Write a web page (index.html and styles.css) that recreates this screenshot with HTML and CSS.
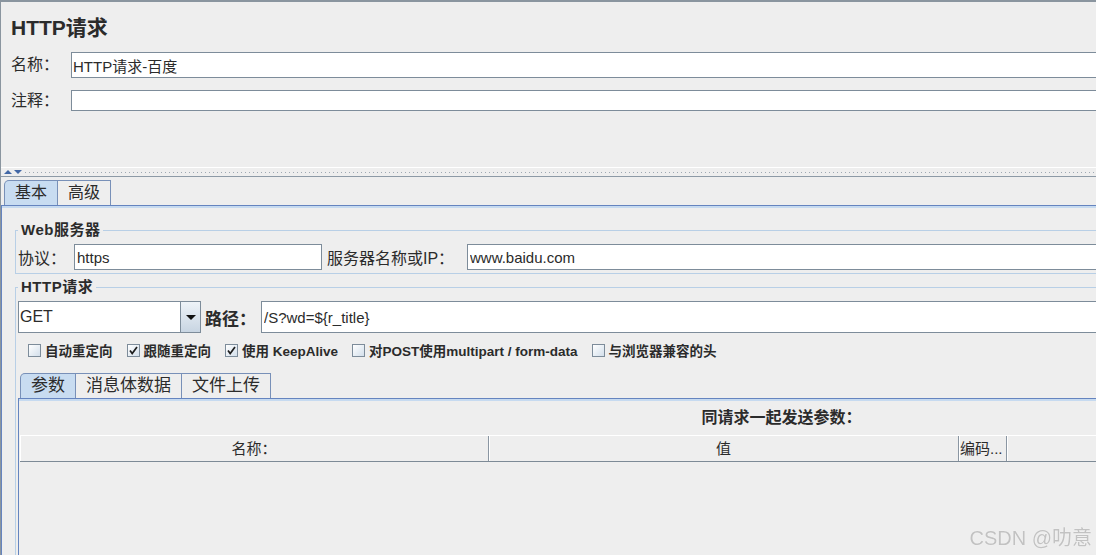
FILE: index.html
```html
<!DOCTYPE html>
<html lang="zh-CN">
<head>
    <meta charset="UTF-8">
    <title>HTTP请求</title>
    <link rel="stylesheet" href="styles.css">
</head>
<body>
    <div class="window">
        <div class="header">
            <h1 class="title">HTTP请求</h1>
            <div class="field-row name-row">
                <label class="field-label">名称：</label>
                <input class="text-input" type="text" value="HTTP请求-百度">
            </div>
            <div class="field-row comment-row">
                <label class="field-label">注释：</label>
                <input class="text-input" type="text" value="">
            </div>
        </div>

        <div class="splitter">
            <span class="arrow-up"></span>
            <span class="arrow-down"></span>
            <span class="dots"></span>
        </div>

        <div class="tabs">
            <div class="tab-strip">
                <div class="tab active">基本</div>
                <div class="tab">高级</div>
            </div>
            <div class="tab-panel">
                <fieldset class="group">
                    <legend>Web服务器</legend>
                    <div class="group-row">
                        <label class="proto-label">协议：</label>
                        <input class="text-input proto" type="text" value="https">
                        <label class="server-label">服务器名称或IP：</label>
                        <input class="text-input grow" type="text" value="www.baidu.com">
                    </div>
                </fieldset>

                <fieldset class="group http-group">
                    <legend>HTTP请求</legend>
                    <div class="group-row">
                        <div class="combo">
                            <span class="combo-value">GET</span>
                            <span class="combo-arrow"><span class="caret"></span></span>
                        </div>
                        <label class="path-label">路径：</label>
                        <input class="text-input grow path" type="text" value="/S?wd=${r_title}">
                    </div>

                    <div class="check-row">
                        <label class="check"><span class="box"></span>自动重定向</label>
                        <label class="check"><span class="box"><svg viewBox="0 0 13 13" width="13" height="13"><path d="M3 6.5 L5.2 9.5 L10 3" fill="none" stroke="#1e1e1e" stroke-width="1.7"/></svg></span>跟随重定向</label>
                        <label class="check"><span class="box"><svg viewBox="0 0 13 13" width="13" height="13"><path d="M3 6.5 L5.2 9.5 L10 3" fill="none" stroke="#1e1e1e" stroke-width="1.7"/></svg></span>使用 KeepAlive</label>
                        <label class="check"><span class="box"></span>对POST使用multipart / form-data</label>
                        <label class="check"><span class="box"></span>与浏览器兼容的头</label>
                    </div>

                    <div class="tab-strip inner-strip">
                        <div class="tab active">参数</div>
                        <div class="tab">消息体数据</div>
                        <div class="tab">文件上传</div>
                    </div>
                    <div class="tab-panel inner-panel">
                        <div class="send-title">同请求一起发送参数：</div>
                        <div class="param-table">
                            <div class="th">名称：</div>
                            <div class="th">值</div>
                            <div class="th encode">编码...</div>
                            <div class="th last"></div>
                        </div>
                    </div>
                </fieldset>
            </div>
        </div>
    </div>
    <div class="watermark">CSDN @叻意</div>
</body>
</html>
```

FILE: styles.css
```css
html, body {
    margin: 0;
    padding: 0;
    overflow: hidden;
}
body {
    width: 1096px;
    height: 555px;
    background-color: #eeeeee;
    font-family: "Liberation Sans", "Noto Sans CJK SC", sans-serif;
    color: #2b2b2b;
}
.window {
    width: 1545px;
    height: 600px;
    box-sizing: border-box;
    border-top: 2px solid #8a959f;
    border-left: 1px solid #8a959f;
    display: flex;
    flex-direction: column;
}

/* top part: title, name, comment */
.header {
    height: 165px;
    flex: none;
}
.title {
    margin: 0;
    padding: 12px 0 0 10px;
    font-size: 21px;
    line-height: 28px;
    font-weight: bold;
    color: #2b2b2b;
}
.field-row {
    display: flex;
    align-items: center;
    padding-left: 10px;
}
.field-label {
    width: 60px;
    flex: none;
    font-size: 16px;
    line-height: 20px;
}
.name-row {
    margin-top: 10px;
}
.name-row .text-input {
    height: 26px;
}
.comment-row {
    margin-top: 12px;
}
.comment-row .text-input {
    height: 21px;
}
.text-input {
    flex: 1;
    min-width: 0;
    box-sizing: border-box;
    margin: 0;
    padding: 0 1px;
    border: 1px solid #7d8c9a;
    background-color: #fff;
    font: 15px "Liberation Sans", "Noto Sans CJK SC", sans-serif;
    color: #2b2b2b;
    outline: none;
}

/* split pane divider */
.splitter {
    flex: none;
    height: 10px;
    box-sizing: border-box;
    border-top: 1px solid #fff;
    border-bottom: 1px solid #8d9aa6;
    display: flex;
    align-items: center;
    padding-left: 3px;
    gap: 1px;
}
.arrow-up {
    width: 0;
    height: 0;
    border-left: 4px solid transparent;
    border-right: 4px solid transparent;
    border-bottom: 4px solid #4268a6;
}
.arrow-down {
    width: 0;
    height: 0;
    margin-left: 1px;
    border-left: 4px solid transparent;
    border-right: 4px solid transparent;
    border-top: 4px solid #4268a6;
}
.dots {
    flex: 1;
    height: 1px;
    margin-left: 2px;
    margin-top: 1px;
    background: repeating-linear-gradient(90deg, #9ea8b2 0 1px, transparent 1px 4px);
}

/* tabs */
.tabs {
    flex: 1;
    display: flex;
    flex-direction: column;
}
.tab-strip {
    display: flex;
    align-items: flex-end;
    padding: 3px 0 0 3px;
}
.tab {
    height: 25px;
    box-sizing: border-box;
    padding: 0 10px;
    border: 1px solid #7890b8;
    border-bottom: none;
    font-size: 16px;
    line-height: 23px;
    color: #2b2b2b;
    background-color: #eeeeee;
}
.tab + .tab {
    border-left: none;
}
.tab.active {
    background-color: #c8dcf1;
    border-top-left-radius: 5px;
}
.tab-panel {
    flex: 1;
    border-top: 1px solid #6584bf;
    border-left: 1px solid #6584bf;
    box-shadow: inset 0 2px 0 #c6daf0;
    padding: 15px 0 0 13px;
    display: flex;
    flex-direction: column;
}

/* titled groups */
.group {
    margin: 0;
    padding: 5px 0 3px 2px;
    border: 1px solid #b8cfe6;
    min-width: 0;
}
.group legend {
    padding: 0 3px;
    font-size: 15px;
    font-weight: bold;
    line-height: 18px;
    letter-spacing: 0.5px;
    color: #2b2b2b;
}
.http-group {
    margin-top: 4px;
    flex: 1;
    display: flex;
    flex-direction: column;
}
.group-row {
    display: flex;
    align-items: center;
}
.proto-label {
    width: 56px;
    flex: none;
    font-size: 16px;
}
.proto {
    flex: none;
    width: 248px;
    height: 26px;
    padding-left: 2px;
}
.server-label {
    width: 140px;
    flex: none;
    margin-left: 5px;
    font-size: 16px;
}
.grow {
    height: 26px;
    padding-left: 2px;
}

/* method combo + path */
.combo {
    width: 183px;
    height: 32px;
    flex: none;
    box-sizing: border-box;
    border: 1px solid #7d8c9a;
    background-color: #fff;
    display: flex;
}
.combo-value {
    flex: 1;
    padding-left: 1px;
    font-size: 16px;
    line-height: 30px;
}
.combo-arrow {
    width: 20px;
    box-sizing: border-box;
    border-left: 1px solid #7d8c9a;
    background: linear-gradient(#eef3f8, #c8d5e2);
    display: flex;
    align-items: center;
    justify-content: center;
}
.caret {
    width: 0;
    height: 0;
    border-left: 5px solid transparent;
    border-right: 5px solid transparent;
    border-top: 5px solid #111;
}
.path-label {
    width: 56px;
    flex: none;
    margin-left: 4px;
    font-size: 17px;
    font-weight: bold;
}
.path {
    height: 32px;
}

/* checkboxes */
.check-row {
    margin-top: 7px;
    height: 20px;
    display: flex;
    align-items: center;
    padding-left: 10px;
    gap: 14px;
}
.check {
    display: flex;
    align-items: center;
    gap: 4px;
    font-size: 13.5px;
    font-weight: bold;
    color: #2b2b2b;
}
.box {
    width: 13px;
    height: 13px;
    box-sizing: border-box;
    border: 1px solid #7d8c9a;
    background: linear-gradient(135deg, #ffffff, #d3dfeb);
    display: flex;
}
.box svg {
    margin: -1px;
}

/* inner tabs */
.inner-strip {
    margin-top: 13px;
    padding: 0 0 0 2px;
}
.inner-strip .tab {
    font-size: 17px;
}
.inner-panel {
    padding: 0;
}
.send-title {
    margin-top: 9px;
    text-align: center;
    font-size: 16px;
    font-weight: bold;
    line-height: 20px;
}
.param-table {
    margin: 7px 0 0 1px;
    height: 27px;
    box-sizing: border-box;
    border-top: 1px solid #fff;
    border-bottom: 1px solid #7d8a96;
    display: grid;
    grid-template-columns: 469px 470px 48px 1fr;
}
.th {
    border-right: 1px solid #8a96a2;
    box-shadow: inset 1px 0 0 #fff;
    text-align: center;
    font-size: 15px;
    line-height: 25px;
    white-space: nowrap;
    overflow: hidden;
    color: #2b2b2b;
}
.th.encode {
    text-align: left;
    padding-left: 1px;
}
.th.last {
    border-right: none;
}

.watermark {
    position: fixed;
    right: 4px;
    bottom: 4px;
    font-size: 20px;
    color: #c2c2c2;
    text-shadow: 0 0 1px #fff;
}
```
